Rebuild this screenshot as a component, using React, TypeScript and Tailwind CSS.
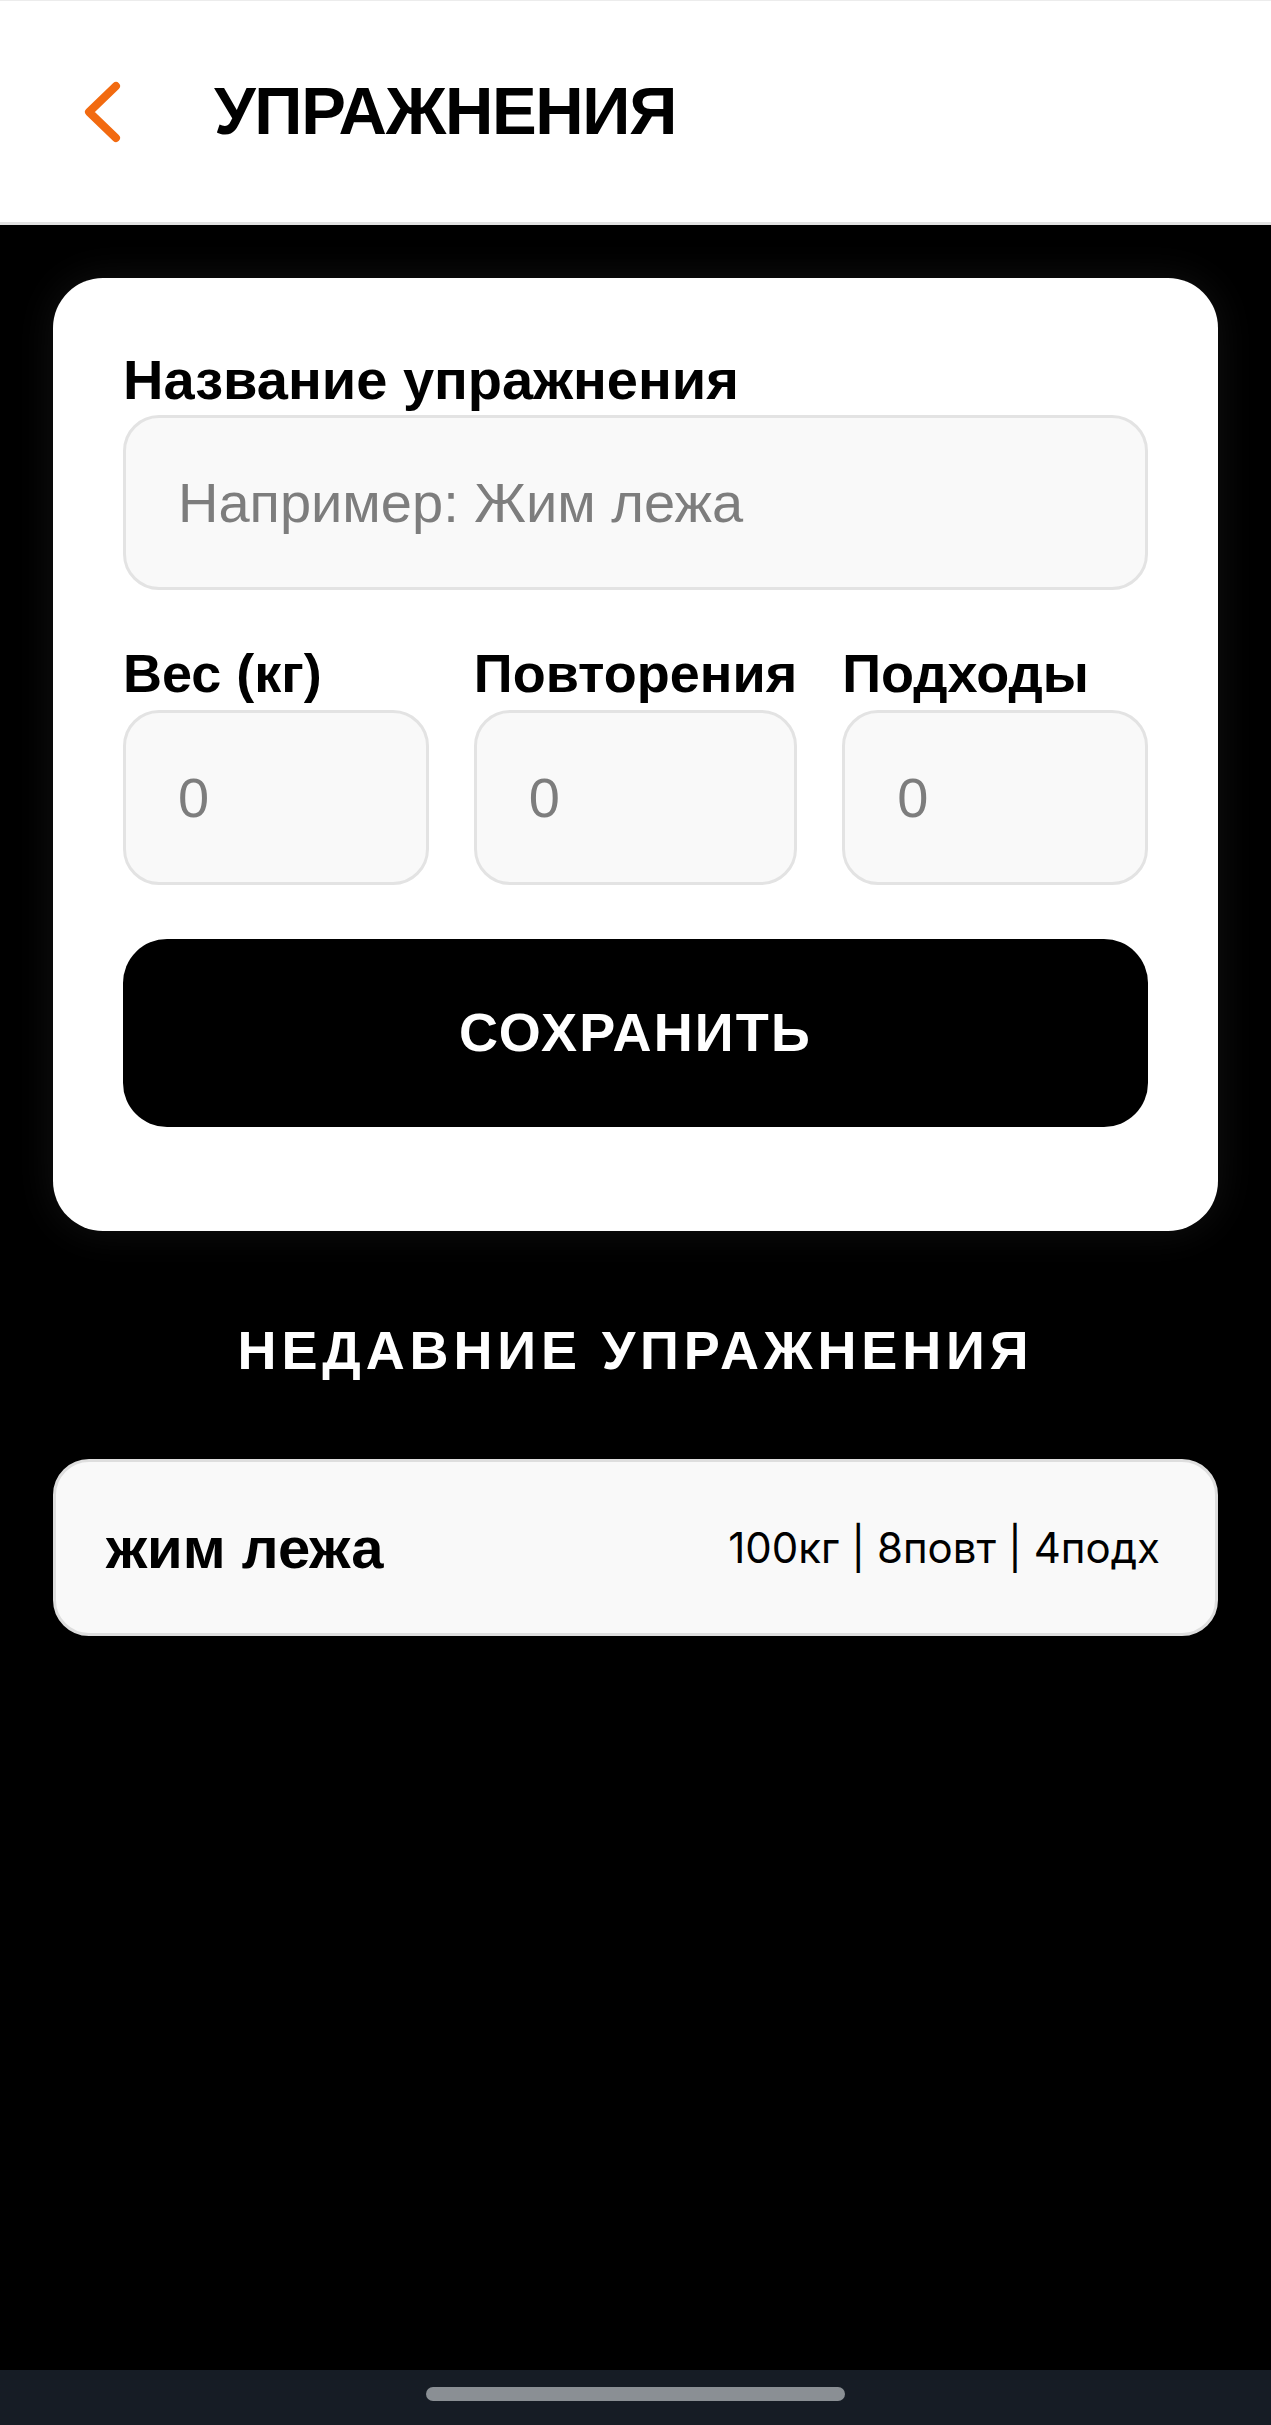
import { useState } from 'react';

const sans = { fontFamily: '"Liberation Sans", Arial, sans-serif' };

function BackIcon() {
  return (
    <svg width="50" height="70" viewBox="0 0 50 70" fill="none" className="shrink-0">
      <path d="M38 9 L11 35 L38 61" stroke="#f26a10" strokeWidth="8" strokeLinecap="round" strokeLinejoin="round" />
    </svg>
  );
}

function NumberField({ label }: { label: string }) {
  return (
    <div className="flex flex-1 flex-col">
      <label className="text-[54px] font-bold leading-[1.17] text-black whitespace-nowrap">{label}</label>
      <input
        type="text"
        placeholder="0"
        className="mt-[4px] h-[175px] w-full rounded-[36px] border-[3px] border-[#e3e3e3] bg-[#f9f9f9] px-[52px] text-[56px] text-black outline-none placeholder:text-[#7d7d7d]"
        style={sans}
      />
    </div>
  );
}

export default function App() {
  const [name, setName] = useState('');

  const recent = [{ title: 'жим лежа', weight: 100, reps: 8, sets: 4 }];

  return (
    <div className="flex min-h-[2425px] flex-col bg-black" style={sans}>
      <header className="flex h-[225px] items-center border-t border-b-[3px] border-t-[#ececec] border-b-[#e2e2e2] bg-white pl-[78px]">
        <BackIcon />
        <h1 className="ml-[86px] text-[67px] font-bold tracking-[-0.02em] text-black">УПРАЖНЕНИЯ</h1>
      </header>

      <main className="flex flex-1 flex-col px-[53px] pt-[53px]">
        <section className="rounded-[50px] bg-white px-[70px] pt-[70px] pb-[104px] shadow-[0_0_40px_rgba(255,255,255,0.07)]">
          <label className="block text-[56px] font-bold leading-[1.15] text-black">Название упражнения</label>
          <input
            value={name}
            onChange={(e) => setName(e.target.value)}
            placeholder="Например: Жим лежа"
            className="mt-[3px] h-[175px] w-full rounded-[36px] border-[3px] border-[#e3e3e3] bg-[#f9f9f9] px-[52px] text-[56px] text-black outline-none placeholder:text-[#7d7d7d]"
            style={sans}
          />

          <div className="mt-[52px] flex gap-[45px]">
            <NumberField label="Вес (кг)" />
            <NumberField label="Повторения" />
            <NumberField label="Подходы" />
          </div>

          <button className="mt-[54px] flex h-[188px] w-full items-center justify-center rounded-[44px] bg-black text-[54px] font-bold tracking-[0.04em] text-white">
            СОХРАНИТЬ
          </button>
        </section>

        <h2 className="mt-[88px] text-center text-[54px] font-bold leading-[1.15] tracking-[0.09em] text-white">
          НЕДАВНИЕ УПРАЖНЕНИЯ
        </h2>

        <div className="mt-[78px] flex flex-col gap-[24px]">
          {recent.map((r) => (
            <div
              key={r.title}
              className="flex h-[177px] items-center justify-between rounded-[36px] border-[3px] border-[#dedede] bg-[#f9f9f9] pl-[50px] pr-[55px]"
            >
              <span className="text-[58px] font-bold text-black">{r.title}</span>
              <span className="text-[42px] text-black" style={{ fontFamily: 'Inter, "Noto Sans", sans-serif' }}>
                {r.weight}кг | {r.reps}повт | {r.sets}подх
              </span>
            </div>
          ))}
        </div>
      </main>

      <div className="flex h-[55px] items-start justify-center bg-[#161c25] pt-[17px]">
        <div className="h-[14px] w-[419px] rounded-full bg-[#8a8f94]" />
      </div>
    </div>
  );
}
